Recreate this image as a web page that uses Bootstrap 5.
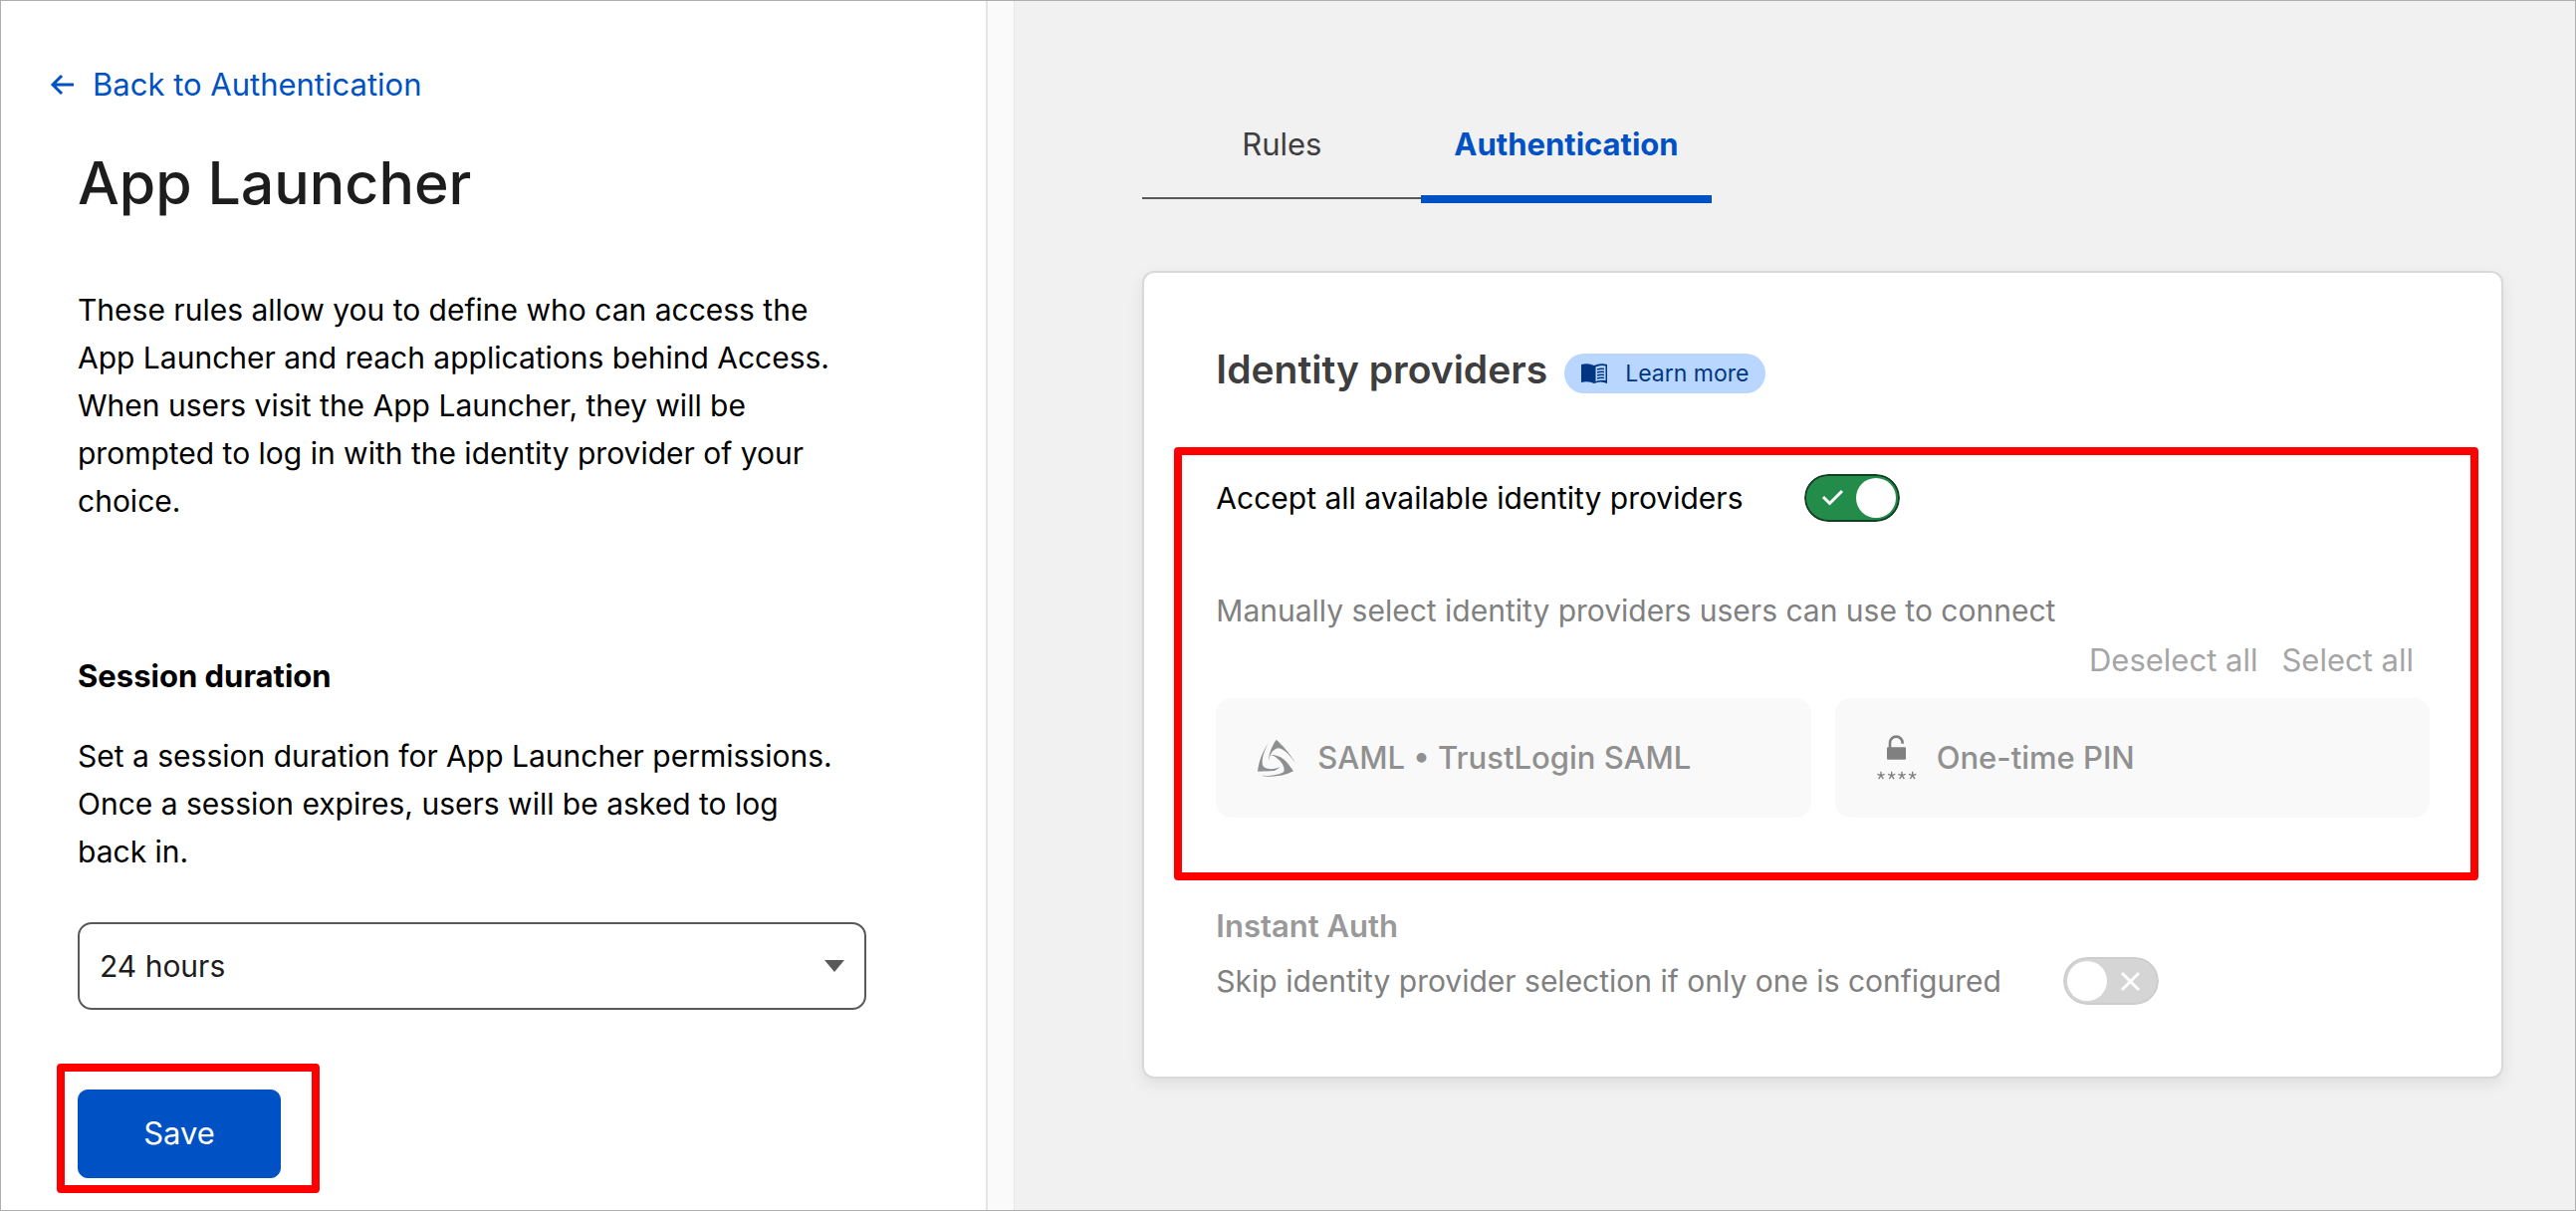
<!DOCTYPE html>
<html lang="en">
<head>
<meta charset="utf-8">
<meta name="viewport" content="width=device-width, initial-scale=1">
<title>App Launcher</title>
<link href="https://cdn.jsdelivr.net/npm/bootstrap@5.3.0/dist/css/bootstrap.min.css" rel="stylesheet">
<style>
  body { font-family: Inter, "Liberation Sans", sans-serif; font-size: 30px; line-height: 48px; color: #000; background: #f1f1f1; }
  a { text-decoration: none; }
  .app-shell { border: 1px solid #aeaeae; }
  .side-panel { flex: 0 0 38.35%; padding: 60px 120px 32px 77px; background: #fff; border-right: 2px solid #e5e5e5; }
  .gutter-strip { flex: 0 0 27px; background: #fafafa; border-right: 1px solid #e8e8e8; }
  .back-link { margin-left: -28px; gap: 18px; color: #0051c3; font-size: 31px; }
  .page-title { margin: 39px 0 67px; font-size: 59px; line-height: 72px; font-weight: 500; color: #1d1d1d; }
  .intro { margin-bottom: 128px; }
  .side-copy { padding-right: 12px; }
  .section-title { font-size: 31px; line-height: 48px; font-weight: 700; margin-bottom: 32px; }
  .duration-select { height: 88px; margin: 47px 0 80px; padding: 0 60px 0 20px; font-size: 30px; color: #1d1d1d; border: 2px solid #595959; border-radius: 14px;
    background-image: url("data:image/svg+xml,%3Csvg xmlns='http://www.w3.org/2000/svg' viewBox='0 0 20 12'%3E%3Cpath d='M0 0h20L10 12z' fill='%23595959'/%3E%3C/svg%3E");
    background-size: 20px 12px; background-position: right 20px center; }
  .save-btn { width: 204px; height: 89px; font-size: 31px; background: #0051c3; border-color: #0051c3; border-radius: 10px; }
  .callout-box::after { content: ""; position: absolute; border: 8px solid #f00; border-radius: 4px; pointer-events: none; }
  .callout-save::after { inset: -26px -39px -15px -21px; }
  .callout-idp::after { inset: -27px -49px -63px -42px; }

  .main-panel { padding: 120px 72px 72px 128px; }
  .tab-item { padding: 0 33px 27px; color: #0051c3; font-size: 31px; font-weight: 700; border-bottom: 8px solid #0051c3; }
  .tab-item.idle { min-width: 280px; padding-bottom: 29px; color: #3e3e3e; font-weight: 400; border-bottom: 2px solid #595959; }
  .panel-card { margin-top: 68px; padding: 73px 72px 72px; border: 2px solid #d9d9d9; border-radius: 12px; background: #fff; box-shadow: 0 6px 16px rgba(0,0,0,.08); }
  .panel-title { font-size: 39px; line-height: 48px; font-weight: 600; color: #3e3e3e; }
  .learn-pill { height: 40px; gap: 18px; padding: 0 17px; border-radius: 20px; background: #b9d6ff; color: #003682; font-size: 23px; }
  .heading-row { gap: 17px; margin-bottom: 81px; }
  .switch-row { gap: 62px; }
  .form-check-input.toggle { width: 96px; height: 48px; margin: 0; border: 0; border-radius: 24px; opacity: 1; background-color: transparent; background-size: 96px 48px; background-position: center;
    background-image: url("data:image/svg+xml,%3Csvg xmlns='http://www.w3.org/2000/svg' viewBox='0 0 96 48'%3E%3Crect x='1' y='1' width='94' height='46' rx='23' fill='%23d5d5d5' stroke='%23cdcdcd' stroke-width='2'/%3E%3Ccircle cx='24' cy='24' r='20' fill='%23fff'/%3E%3Cpath d='M59 16l17 17M76 16L59 33' stroke='%23fff' stroke-width='3'/%3E%3C/svg%3E"); }
  .form-check-input.toggle:checked { background-image: url("data:image/svg+xml,%3Csvg xmlns='http://www.w3.org/2000/svg' viewBox='0 0 96 48'%3E%3Crect x='1' y='1' width='94' height='46' rx='23' fill='%23248c4b' stroke='%23123f22' stroke-width='2'/%3E%3Ccircle cx='72' cy='24' r='20' fill='%23fff'/%3E%3Cpath d='M19 23l6.500 6.500L38 17' fill='none' stroke='%23fff' stroke-width='3'/%3E%3C/svg%3E"); }
  .muted-copy { margin-top: 65px; color: #808080; }
  .bulk-actions { gap: 24px; margin: 2px 16px 14px 0; }
  .bulk-actions button { font-size: 31px; line-height: 48px; color: #a5a5a5; }
  .provider-grid { gap: 24px; }
  .provider-tile { flex: 1 1 0; height: 120px; gap: 20px; padding: 0 42px; border: 0; border-radius: 16px; background: #f9f9f9; color: #909090; font-size: 31px; font-weight: 500; text-align: left; }
  .instant-auth { margin-top: 85px; }
  .instant-auth h3 { font-size: 31px; line-height: 48px; font-weight: 600; margin: 0 0 7px; color: #999; }
  .instant-auth label { color: #808080; }
</style>
</head>
<body>
<div class="app-shell d-flex min-vh-100">
  <aside class="side-panel">
    <a href="#" class="back-link d-inline-flex align-items-center">
      <svg width="25" height="22" viewBox="0 0 25 22" fill="none" stroke="#0051c3" stroke-width="3" aria-hidden="true"><path d="M24 11H3M12 2L3 11l9 9"/></svg>
      <span>Back to Authentication</span>
    </a>
    <h1 class="page-title">App Launcher</h1>
    <p class="intro side-copy">These rules allow you to define who can access the App Launcher and reach applications behind Access. When users visit the App Launcher, they will be prompted to log in with the identity provider of your choice.</p>
    <h2 class="section-title"><label for="duration">Session duration</label></h2>
    <p class="side-copy mb-0">Set a session duration for App Launcher permissions. Once a session expires, users will be asked to log back in.</p>
    <select id="duration" class="form-select duration-select"><option>24 hours</option></select>
    <div class="callout-box callout-save position-relative d-inline-block align-top">
      <button type="button" class="btn btn-primary save-btn d-block">Save</button>
    </div>
  </aside>
  <div class="gutter-strip"></div>
  <main class="main-panel flex-grow-1">
    <nav class="d-flex align-items-start text-center">
      <a href="#" class="tab-item idle">Rules</a>
      <a href="#" class="tab-item" aria-current="page">Authentication</a>
    </nav>
    <section class="panel-card">
      <div class="heading-row d-flex align-items-end">
        <h2 class="panel-title mb-0">Identity providers</h2>
        <a href="#" class="learn-pill d-inline-flex align-items-center">
          <svg width="26" height="20" viewBox="0 0 26 20" aria-hidden="true"><path d="M0 1Q7-1 13 2Q19-1 26 1V20Q19 17 13 20Q7 17 0 19Z" fill="#003682"/><path d="M14.500 3.500Q19 1 24.500 2.500V17Q19 16 14.500 18Z" fill="#b9d6ff"/><path d="M16 6q3-1 7-.5M16 9q3-1 7-.5M16 12q3-1 7-.5M16 15q3-1 7-.5" stroke="#003682" stroke-width="1.500" fill="none"/></svg>
          <span>Learn more</span>
        </a>
      </div>
      <div class="callout-box callout-idp position-relative">
        <div class="switch-row d-flex align-items-center">
          <label for="acceptAll">Accept all available identity providers</label>
          <input class="form-check-input toggle" type="checkbox" role="switch" id="acceptAll" checked>
        </div>
        <p class="muted-copy mb-0">Manually select identity providers users can use to connect</p>
        <div class="bulk-actions d-flex justify-content-end">
          <button type="button" class="border-0 bg-transparent p-0" disabled>Deselect all</button>
          <button type="button" class="border-0 bg-transparent p-0" disabled>Select all</button>
        </div>
        <div class="provider-grid d-flex">
          <button type="button" class="provider-tile d-flex align-items-center" disabled>
            <svg width="40" height="39" viewBox="42 33 120 117" fill="#8e8f91" aria-hidden="true"><path d="M98 35C118 53 142 80 158 109C142 86 124 64 106 61C90 62 79 76 76 99C75 80 82 60 98 35Z"/><path d="M74 45C57 72 45 101 42 131L92 129Q104 125 109 117C92 126 67 126 58 114C52 98 60 74 74 45Z"/><path d="M82 81C106 81 124 94 134 108L150 130C119 146 84 149 53 144C84 144 112 140 121 131C126 115 108 90 82 81Z"/></svg>
            <span>SAML • TrustLogin SAML</span>
          </button>
          <button type="button" class="provider-tile d-flex align-items-center" disabled>
            <svg width="40" height="46" viewBox="45 25 120 138" aria-hidden="true"><rect x="75" y="62" width="57" height="37" rx="3" fill="#808080"/><path d="M84 64V49a19 19 0 0 1 38 0V51" fill="none" stroke="#808080" stroke-width="8"/><g stroke="#808080" stroke-width="4"><path id="star" d="M57 147v-12M57 147l-11-4M57 147l11-4M57 147l-7 10M57 147l7 10"/><use href="#star" x="32"/><use href="#star" x="63"/><use href="#star" x="95"/></g></svg>
            <span>One-time PIN</span>
          </button>
        </div>
      </div>
      <div class="instant-auth">
        <h3>Instant Auth</h3>
        <div class="switch-row d-flex align-items-center">
          <label for="instant">Skip identity provider selection if only one is configured</label>
          <input class="form-check-input toggle" type="checkbox" role="switch" id="instant" disabled>
        </div>
      </div>
    </section>
  </main>
</div>
<script src="https://cdn.jsdelivr.net/npm/bootstrap@5.3.0/dist/js/bootstrap.bundle.min.js"></script>
</body>
</html>
